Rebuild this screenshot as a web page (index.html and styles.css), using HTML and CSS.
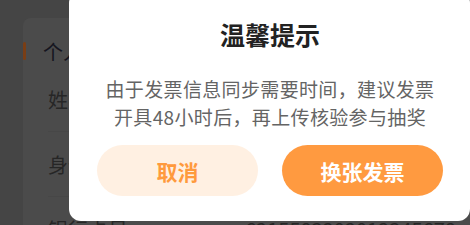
FILE: index.html
```html
<!DOCTYPE html>
<html lang="zh-CN">
<head>
<meta charset="utf-8">
<title>温馨提示</title>
<link rel="stylesheet" href="styles.css">
</head>
<body>
<div class="page">
  <section class="card">
    <div class="card-head"><span class="bar"></span><span class="head-text">个人信息</span></div>
    <div class="row"><span class="label">姓名</span><span class="value">张三</span></div>
    <div class="row"><span class="label">身份证号</span><span class="value">110101199001011234</span></div>
    <div class="row"><span class="label">银行卡号</span><span class="value">6215583202012345678</span></div>
  </section>
</div>
<div class="dialog">
  <h2 class="title">温馨提示</h2>
  <p class="msg">由于发票信息同步需要时间，建议发票<br>开具48小时后，再上传核验参与抽奖</p>
  <div class="actions">
    <button class="btn btn-cancel">取消</button>
    <button class="btn btn-ok">换张发票</button>
  </div>
</div>
</body>
</html>
```
FILE: styles.css
```css
html, body {
  margin: 0;
  padding: 0;
}
body {
  width: 470px;
  height: 225px;
  overflow: hidden;
  background: #454545;
  font-family: "Noto Sans CJK SC", "Noto Sans", sans-serif;
  position: relative;
}
.page {
  padding: 18px 0 0 23px;
}
.card {
  background: #4b4b4b;
  border-radius: 8px 0 0 0;
  padding-top: 19px;
  height: 400px;
}
.card-head {
  display: flex;
  align-items: center;
  height: 28px;
  margin-bottom: 2px;
}
.bar {
  width: 3px;
  height: 18px;
  background: #7a3e15;
  border-radius: 2px;
}
.head-text {
  margin-left: 17px;
  font-size: 20px;
  color: #15151f;
}
.row {
  margin-left: 25px;
  height: 65px;
  display: flex;
  align-items: center;
  justify-content: space-between;
  border-bottom: 1px solid #474747;
  box-sizing: border-box;
  font-size: 20px;
  color: #262626;
}
.value {
  width: 225px;
  text-align: left;
  white-space: nowrap;
  color: #262626;
}
.dialog {
  position: absolute;
  left: 69px;
  top: -9px;
  width: 401px;
  height: 230px;
  box-sizing: border-box;
  background: #fff;
  border-radius: 12px;
  padding: 26px 27px 24px 28px;
  display: flex;
  flex-direction: column;
  align-items: center;
}
.title {
  margin: 0;
  font-size: 25px;
  line-height: 35px;
  font-weight: 700;
  color: #222;
}
.msg {
  margin: 23px 0 0;
  font-size: 19px;
  line-height: 28px;
  letter-spacing: 0.35px;
  color: #646464;
  text-align: center;
  white-space: nowrap;
}
.actions {
  margin-top: 14px;
  display: flex;
  gap: 24px;
}
.btn {
  width: 161px;
  height: 51px;
  border: none;
  border-radius: 26px;
  font-family: inherit;
  font-size: 21px;
  font-weight: 700;
  padding: 0;
}
.btn-cancel {
  background: #fff0e2;
  color: #ff9a3d;
}
.btn-ok {
  background: #ff9a40;
  color: #fff;
}
```
